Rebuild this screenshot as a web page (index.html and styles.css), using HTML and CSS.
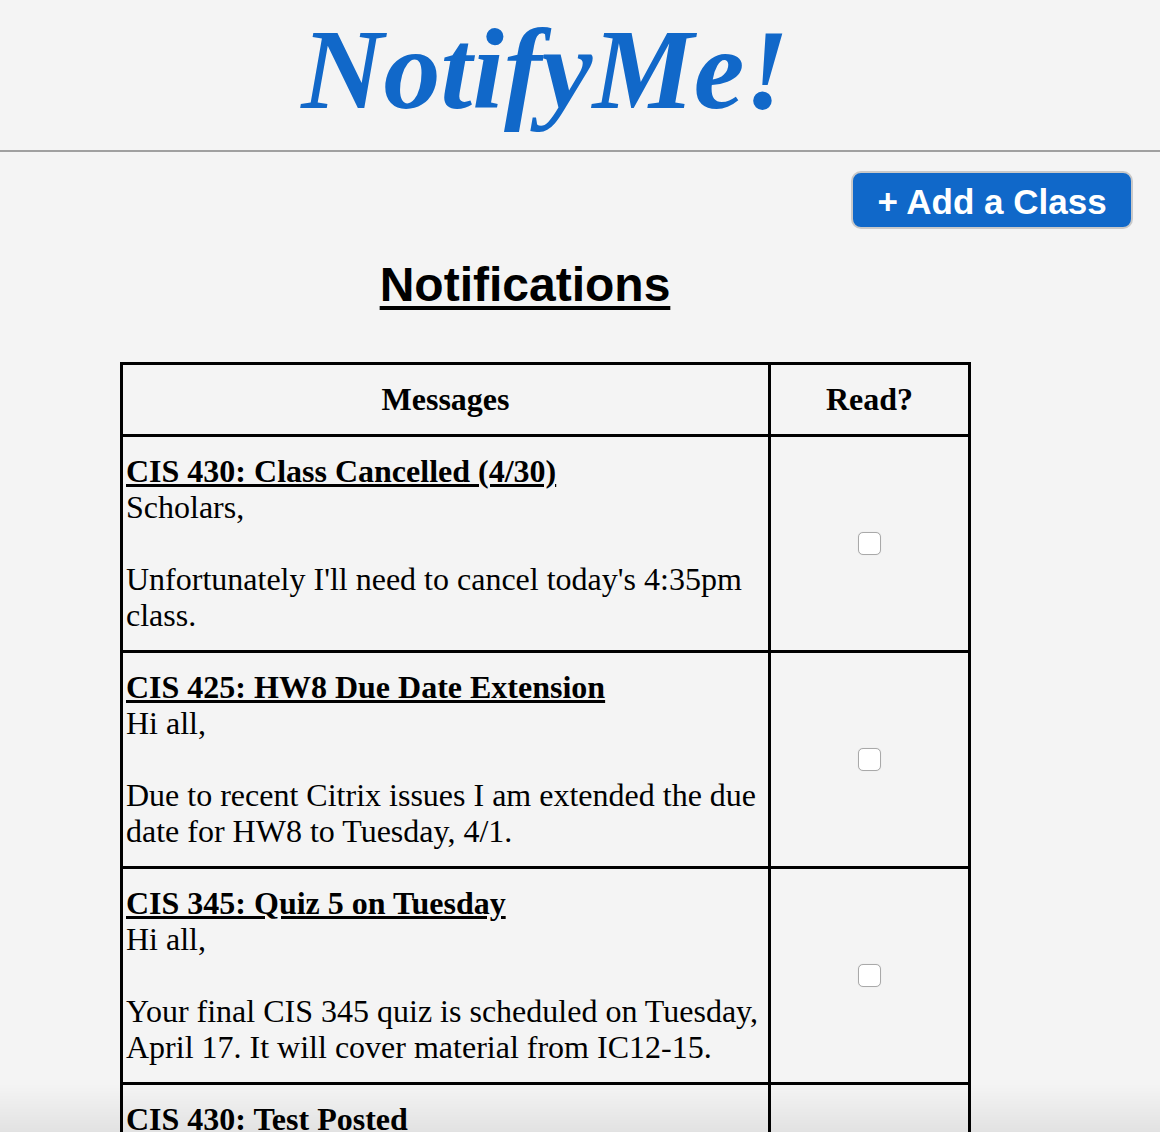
FILE: index.html
```html
<!DOCTYPE html>
<html lang="en">
<head>
<meta charset="utf-8">
<title>NotifyMe!</title>
<link rel="stylesheet" href="styles.css">
</head>
<body>
<header class="site-header">
  <h1 class="brand">NotifyMe!</h1>
</header>
<main class="content">
  <div class="actions">
    <button class="add-btn" type="button">+ Add a Class</button>
  </div>
  <h2 class="section-title">Notifications</h2>
  <table class="notes">
    <thead>
      <tr>
        <th class="col-msg">Messages</th>
        <th class="col-read">Read?</th>
      </tr>
    </thead>
    <tbody>
      <tr>
        <td class="msg">
          <a class="msg-title" href="#">CIS 430: Class Cancelled (4/30)</a><br>
          Scholars,<br><br>
          Unfortunately I'll need to cancel today's 4:35pm class.
        </td>
        <td class="read"><input class="check" type="checkbox"></td>
      </tr>
      <tr>
        <td class="msg">
          <a class="msg-title" href="#">CIS 425: HW8 Due Date Extension</a><br>
          Hi all,<br><br>
          Due to recent Citrix issues I am extended the due date for HW8 to Tuesday, 4/1.
        </td>
        <td class="read"><input class="check" type="checkbox"></td>
      </tr>
      <tr>
        <td class="msg">
          <a class="msg-title" href="#">CIS 345: Quiz 5 on Tuesday</a><br>
          Hi all,<br><br>
          Your final CIS 345 quiz is scheduled on Tuesday, April 17. It will cover material from IC12-15.
        </td>
        <td class="read"><input class="check" type="checkbox"></td>
      </tr>
      <tr>
        <td class="msg">
          <a class="msg-title" href="#">CIS 430: Test Posted</a><br>
          Hi all,<br><br>
          The test is now posted on the course page.
        </td>
        <td class="read"><input class="check" type="checkbox"></td>
      </tr>
    </tbody>
  </table>
</main>
<div class="bottom-fade"></div>
</body>
</html>
```
FILE: styles.css
```css
html, body {
  margin: 0;
  padding: 0;
  background: #f4f4f4;
}

body {
  font-family: "Liberation Serif", "Times New Roman", serif;
  color: #000;
}

.site-header {
  height: 150px;
  border-bottom: 2px solid #a0a0a0;
  display: flex;
  justify-content: center;
  padding-right: 70px;
}

.brand {
  margin: 0;
  padding-top: 10px;
  font-family: "Liberation Serif", "Times New Roman", serif;
  font-style: italic;
  font-weight: bold;
  font-size: 114px;
  line-height: 120px;
  color: #1168c9;
}

.content {
  padding: 19px 27px 60px 120px;
}

.actions {
  display: flex;
  justify-content: flex-end;
}

.add-btn {
  width: 282px;
  height: 58px;
  background: #1068c9;
  color: #fff;
  border: 2px solid #c9c9c9;
  border-radius: 10px;
  font-family: "Liberation Sans", Arial, sans-serif;
  font-weight: bold;
  font-size: 35px;
  line-height: 1;
  padding: 3px 0 0;
  cursor: pointer;
}

.section-title {
  width: 810px;
  margin: 28px 0 49px;
  text-align: center;
  font-family: "Liberation Sans", Arial, sans-serif;
  font-weight: bold;
  font-size: 48px;
  line-height: 56px;
  text-decoration: underline;
  text-underline-offset: 5px;
  text-decoration-thickness: 4px;
}

.notes {
  width: 851px;
  border-collapse: separate;
  border-spacing: 0;
  border-left: 3px solid #000;
  border-top: 3px solid #000;
  font-size: 32px;
  table-layout: fixed;
}

.notes th,
.notes td {
  border-right: 3px solid #000;
  border-bottom: 3px solid #000;
}

.notes th {
  font-weight: bold;
  padding: 0 3px;
  height: 69px;
  line-height: 37px;
  box-sizing: content-box;
}

.col-msg {
  width: 645px;
}

.col-read {
  width: 197px;
}

.notes .col-msg,
.notes .col-read {
  padding: 0;
}

.msg {
  padding: 16px 3px 17px;
  line-height: 36px;
  vertical-align: top;
}

.msg-title {
  color: #000;
  font-weight: bold;
  text-decoration: underline;
}

.read {
  padding: 0;
  vertical-align: middle;
}

.check {
  -webkit-appearance: none;
  appearance: none;
  display: block;
  width: 23px;
  height: 23px;
  margin: 0 auto;
  border: 1.5px solid #a9a9a9;
  border-radius: 5px;
  background: #fff;
  box-shadow: 0 0 1px rgba(0,0,0,0.15);
}

.bottom-fade {
  position: fixed;
  left: 0;
  right: 0;
  bottom: 0;
  height: 48px;
  background: linear-gradient(to bottom, rgba(0,0,0,0), rgba(0,0,0,0.07));
  pointer-events: none;
}
```
